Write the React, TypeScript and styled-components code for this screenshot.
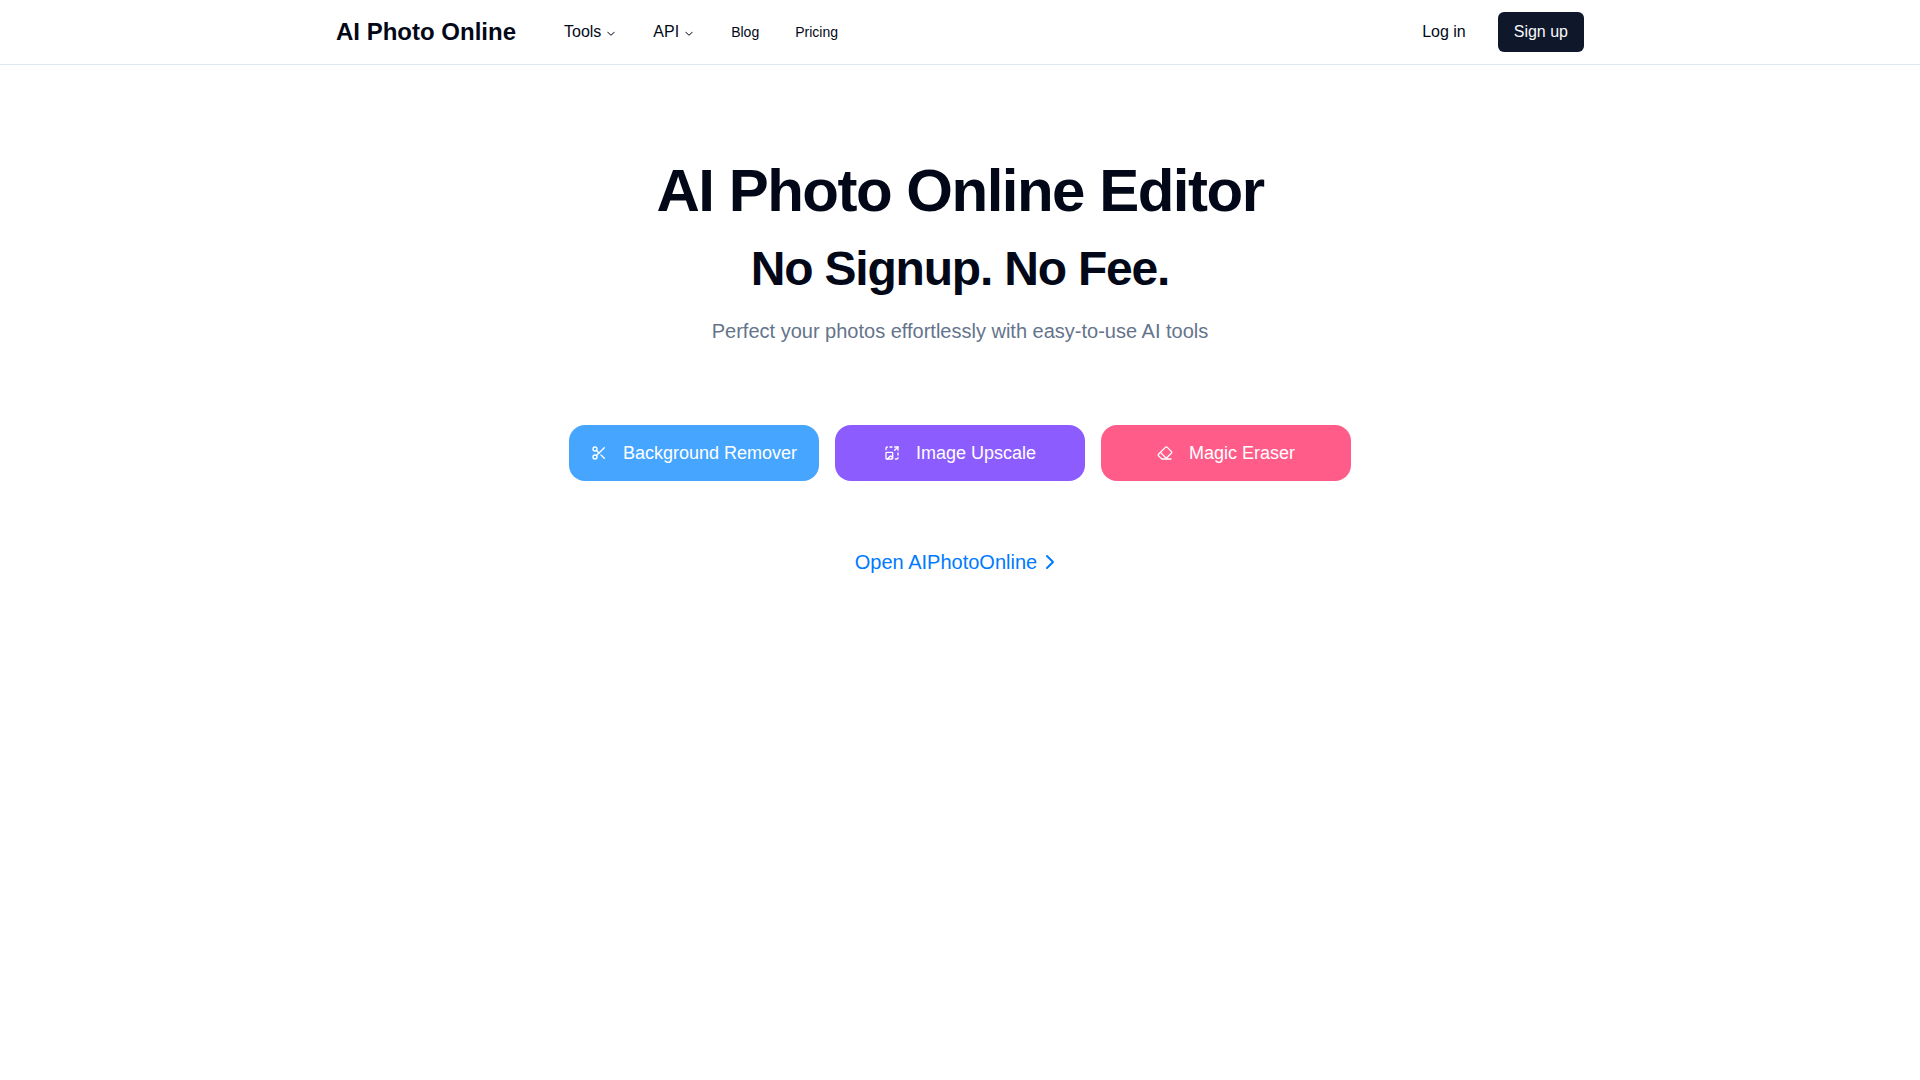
import React from "react";
import styled, { createGlobalStyle } from "styled-components";
import { ChevronRight, Scissors, ImageUpscale, Eraser } from "lucide-react";
import { RxChevronDown } from "react-icons/rx";

const GlobalStyle = createGlobalStyle`
  *, *::before, *::after { box-sizing: border-box; }
  body {
    margin: 0;
    background: #fff;
    color: #020817;
    font: 16px/24px "Liberation Sans", Arial, sans-serif;
  }
  h1, h2, p { margin: 0; }
  a { color: inherit; text-decoration: none; }
  button { font: inherit; color: inherit; border: 0; background: none; padding: 0; cursor: pointer; }
`;

const Header = styled.header`
  border-bottom: 1px solid #e2e8f0;
`;

const HeaderInner = styled.div`
  max-width: 1280px;
  height: 64px;
  margin: 0 auto;
  padding: 0 16px;
  display: flex;
  align-items: center;
  justify-content: space-between;
`;

const Brand = styled.a`
  font-size: 24px;
  line-height: 32px;
  font-weight: 700;
`;

const Group = styled.div<{ $gap: number }>`
  display: flex;
  align-items: center;
  gap: ${(p) => p.$gap}px;
`;

const Nav = styled.nav`
  display: flex;
  align-items: center;
  gap: 36px;
`;

const MenuButton = styled.button`
  display: flex;
  align-items: center;
  gap: 4px;

  svg {
    margin-top: 2px;
  }
`;

const NavLink = styled.a`
  font-size: 14px;
  line-height: 20px;
`;

const SignUp = styled.a`
  padding: 8px 16px;
  border-radius: 6px;
  background: #0f172a;
  color: #f8fafc;
`;

const Main = styled.main`
  display: flex;
  flex-direction: column;
  align-items: center;
  padding: 96px 16px;
  text-align: center;
`;

const Title = styled.h1`
  font-size: 60px;
  line-height: 60px;
  letter-spacing: -0.025em;
`;

const Subtitle = styled.h2`
  margin-top: 24px;
  font-size: 48px;
  line-height: 48px;
  letter-spacing: -0.025em;
`;

const Lead = styled.p`
  margin-top: 24px;
  font-size: 20px;
  line-height: 28px;
  color: #64748b;
`;

const Tools = styled.div`
  display: flex;
  flex-wrap: wrap;
  justify-content: center;
  gap: 16px;
  margin-top: 80px;
`;

const Tool = styled.a<{ $color: string }>`
  display: flex;
  align-items: center;
  justify-content: center;
  gap: 16px;
  width: 250px;
  height: 56px;
  border-radius: 16px;
  background: ${(p) => p.$color};
  color: #fff;
  font-size: 18px;
  line-height: 28px;
`;

const OpenLink = styled.a`
  display: flex;
  align-items: center;
  gap: 1px;
  margin-top: 67px;
  padding-right: 3px;
  font-size: 20px;
  line-height: 28px;
  color: #007aff;
`;

const tools = [
  { label: "Background Remover", color: "#45a5ff", Icon: Scissors },
  { label: "Image Upscale", color: "#8c5cff", Icon: ImageUpscale },
  { label: "Magic Eraser", color: "#ff5c8a", Icon: Eraser },
];

export default function App() {
  return (
    <>
      <GlobalStyle />
      <Header>
        <HeaderInner>
          <Group $gap={48}>
            <Brand href="#">AI Photo Online</Brand>
            <Nav>
              <MenuButton type="button">Tools <RxChevronDown size={12} /></MenuButton>
              <MenuButton type="button">API <RxChevronDown size={12} /></MenuButton>
              <NavLink href="#">Blog</NavLink>
              <NavLink href="#">Pricing</NavLink>
            </Nav>
          </Group>
          <Group $gap={32}>
            <a href="#">Log in</a>
            <SignUp href="#">Sign up</SignUp>
          </Group>
        </HeaderInner>
      </Header>
      <Main>
        <Title>AI Photo Online Editor</Title>
        <Subtitle>No Signup. No Fee.</Subtitle>
        <Lead>Perfect your photos effortlessly with easy-to-use AI tools</Lead>
        <Tools>
          {tools.map(({ label, color, Icon }) => (
            <Tool key={label} href="#" $color={color}>
              <Icon size={16} />
              {label}
            </Tool>
          ))}
        </Tools>
        <OpenLink href="#">
          Open AIPhotoOnline <ChevronRight size={24} />
        </OpenLink>
      </Main>
    </>
  );
}
